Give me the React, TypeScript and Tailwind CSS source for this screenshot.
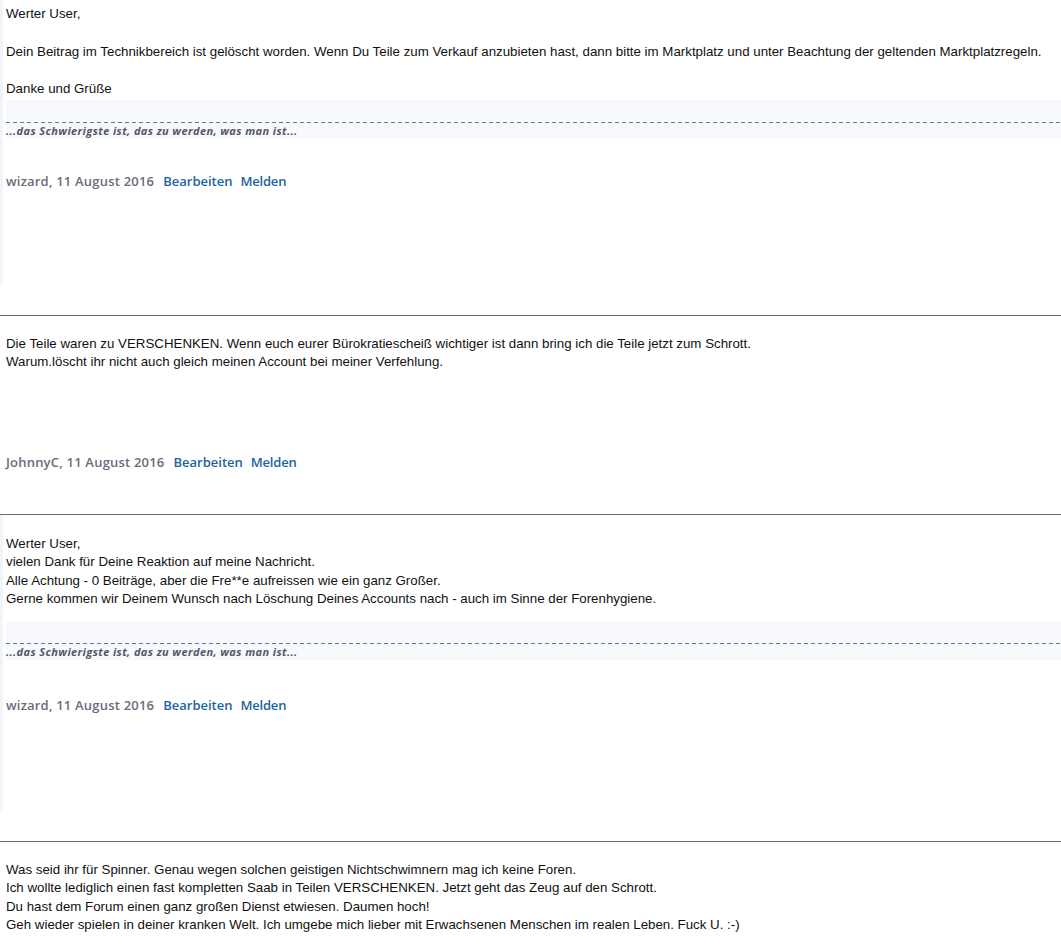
type Post = {
  author: string;
  lines: string[];
  signature?: boolean;
  padTop: string;
  leading: string;
  sigTop?: string;
  metaTop: string;
  padBottom: string;
  strip?: boolean;
};

const posts: Post[] = [
  {
    author: "wizard",
    lines: [
      "Werter User,",
      "",
      "Dein Beitrag im Technikbereich ist gelöscht worden. Wenn Du Teile zum Verkauf anzubieten hast, dann bitte im Marktplatz und unter Beachtung der geltenden Marktplatzregeln.",
      "",
      "Danke und Grüße",
    ],
    signature: true,
    padTop: "pt-[5px]",
    leading: "leading-[18.75px]",
    sigTop: "mt-[1px]",
    metaTop: "mt-[34px]",
    padBottom: "h-[94px]",
    strip: true,
  },
  {
    author: "JohnnyC",
    lines: [
      "Die Teile waren zu VERSCHENKEN. Wenn euch eurer Bürokratiescheiß wichtiger ist dann bring ich die Teile jetzt zum Schrott.",
      "Warum.löscht ihr nicht auch gleich meinen Account bei meiner Verfehlung.",
    ],
    padTop: "pt-[19px]",
    leading: "leading-[18.5px]",
    metaTop: "mt-[82px]",
    padBottom: "h-[12px]",
  },
  {
    author: "wizard",
    lines: [
      "Werter User,",
      "vielen Dank für Deine Reaktion auf meine Nachricht.",
      "Alle Achtung - 0 Beiträge, aber die Fre**e aufreissen wie ein ganz Großer.",
      "Gerne kommen wir Deinem Wunsch nach Löschung Deines Accounts nach - auch im Sinne der Forenhygiene.",
    ],
    signature: true,
    padTop: "pt-[20px]",
    leading: "leading-[18.5px]",
    sigTop: "mt-[12px]",
    metaTop: "mt-[37px]",
    padBottom: "h-[96px]",
    strip: true,
  },
  {
    author: "JohnnyC",
    lines: [
      "Was seid ihr für Spinner. Genau wegen solchen geistigen Nichtschwimnern mag ich keine Foren.",
      "Ich wollte lediglich einen fast kompletten Saab in Teilen VERSCHENKEN. Jetzt geht das Zeug auf den Schrott.",
      "Du hast dem Forum einen ganz großen Dienst etwiesen. Daumen hoch!",
      "Geh wieder spielen in deiner kranken Welt. Ich umgebe mich lieber mit Erwachsenen Menschen im realen Leben. Fuck U. :-)",
    ],
    padTop: "pt-[19px]",
    leading: "leading-[18.5px]",
    metaTop: "mt-[82px]",
    padBottom: "h-[12px]",
  },
];

function PostBlock({ post, last }: { post: Post; last: boolean }) {
  return (
    <div className={last ? "" : "border-b border-[#6c6c74]"}>
      <div className={post.strip ? "border-l-[3px] border-[#f1f4f9]" : "border-l-[3px] border-white"}>
        <div className={`${post.padTop} pl-[3px]`}>
          <div className={`font-['Liberation_Sans',Arial,sans-serif] text-[13.3px] ${post.leading} text-[#111]`}>
            {post.lines.map((l, i) => (
              <div key={i} className="min-h-[1lh] whitespace-nowrap">
                {l}
              </div>
            ))}
          </div>

          {post.signature && (
            <div className={`${post.sigTop} bg-[#f8f9fd] pt-[22px]`}>
              <div className="h-px bg-[repeating-linear-gradient(to_right,#5b78a8_0_4px,transparent_4px_7px)]" />
              <div className="h-[16px] font-['Open_Sans',sans-serif] text-[11px] font-bold italic leading-[16px] tracking-[0.4px] text-[#55566a]">
                ...das Schwierigste ist, das zu werden, was man ist...
              </div>
            </div>
          )}

          {!last && (
            <div className={`${post.metaTop} flex h-[18px] items-center font-['Open_Sans',sans-serif] text-[13px] font-semibold`}>
              <span className="tracking-[0.2px] text-[#6b6b7b]">{post.author}, 11 August 2016</span>
              <a href="#" className="ml-[9px] text-[#1d63a0]">
                Bearbeiten
              </a>
              <a href="#" className="ml-[8px] tracking-[-0.2px] text-[#1d63a0]">
                Melden
              </a>
            </div>
          )}
        </div>
        {!last && <div className={post.padBottom} />}
      </div>
      {!last && <div className="h-[30px]" />}
    </div>
  );
}

export default function App() {
  return (
    <main className="min-h-screen overflow-hidden bg-white">
      {posts.map((p, i) => (
        <PostBlock key={i} post={p} last={i === posts.length - 1} />
      ))}
    </main>
  );
}
